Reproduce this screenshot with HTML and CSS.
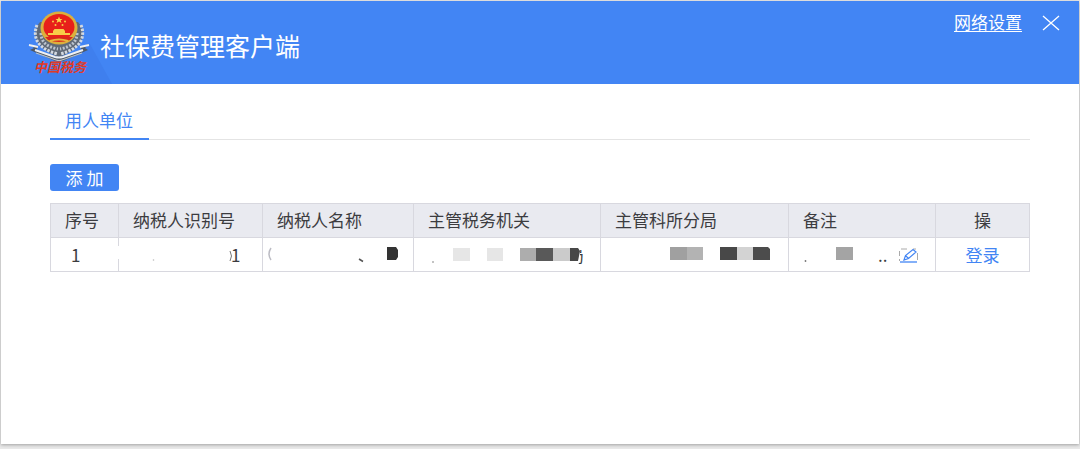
FILE: index.html
```html
<!DOCTYPE html>
<html lang="zh-CN">
<head>
<meta charset="utf-8">
<title>社保费管理客户端</title>
<link rel="stylesheet" href="styles.css">
</head>
<body>
<div class="window">
  <header class="titlebar">
    <div class="brand">
      <svg class="emblem" width="84" height="82" viewBox="28 2 84 82" role="img" aria-label="中国税务">
        <path d="M40 84V74L90 44L112 84Z" fill="#3f7fee"/>
        <path d="M40 22C30 34 36 49 59 57C82 49 88 34 78 22Z" fill="#5f6977"/>
        <g fill="none" stroke="#d3d9e1" stroke-width="3" stroke-dasharray="2.500 1.300">
          <path d="M37 25C32 38 38 49 58 54"/><path d="M81 25C86 38 80 49 60 54"/>
        </g>
        <g fill="none" stroke="#bcc4ce" stroke-width="3" stroke-dasharray="2 1.500">
          <path d="M41 33C41 42 47 47 58 49"/><path d="M77 33C77 42 71 47 60 49"/>
        </g>
        <path d="M29 44L38 47L36 50L55 56Q59 58 63 56L82 50L80 47L89 44L85 48L88 50L63 61Q59 62 55 61L30 50L34 48Z" fill="#4d5867"/>
        <path d="M29 45L38 47M89 45L80 47M35 50L55 57Q59 58 63 57L83 50" fill="none" stroke="#eef0f3" stroke-width="2"/>
        <path d="M36 53L56 60Q59 61 62 60L82 53" fill="none" stroke="#b9c0c9" stroke-width="1.200"/>
        <ellipse cx="59" cy="28" rx="18.500" ry="16.500" fill="#dcb03c"/>
        <ellipse cx="59" cy="27" rx="15.500" ry="13" fill="#e8201a"/>
        <path d="M59 16.500L60 19H62.500L60.600 20.500L61.500 23L59 21.500L56.500 23L57.400 20.500L55.500 19H58Z" fill="#fbd84b"/>
        <g fill="#f7cd48"><circle cx="53" cy="21.500" r="1"/><circle cx="65" cy="21.500" r="1"/><circle cx="55.500" cy="25" r="1"/><circle cx="62.500" cy="25" r="1"/>
          <path d="M53 31L54.500 29H63.500L65 31V33H70V35H48V33H53Z"/>
        </g>
        <path d="M45 37H73L70 40Q59 44 48 40Z" fill="#d9261c"/>
        <path d="M50 41Q59 38 68 41" fill="none" stroke="#e8b93c" stroke-width="2"/>
        <text class="emblem-text" x="34" y="72">中国税务</text>
      </svg>
      <h1 class="title">社保费管理客户端</h1>
    </div>
    <div class="actions">
      <a class="network" href="#">网络设置</a>
      <button class="close" type="button" aria-label="关闭">
        <svg width="18" height="16" viewBox="0 0 18 16"><path d="M1 1L17 15M17 1L1 15" fill="none" stroke="#fff" stroke-width="1.300"/></svg>
      </button>
    </div>
  </header>
  <main class="content">
    <nav class="tabs"><a class="tab" href="#" aria-current="page">用人单位</a></nav>
    <button class="add" type="button">添 加</button>
    <table class="units">
      <colgroup>
        <col class="c-index"><col class="c-id"><col class="c-name"><col class="c-authority"><col class="c-branch"><col class="c-note"><col class="c-action">
      </colgroup>
      <thead>
        <tr><th>序号</th><th>纳税人识别号</th><th>纳税人名称</th><th>主管税务机关</th><th>主管科所分局</th><th>备注</th><th class="center">操</th></tr>
      </thead>
      <tbody>
        <tr>
          <td class="index">1</td>
          <td><div class="cell">
            <svg width="112" height="33" viewBox="118 237 112 33"><path d="M116 245H120V258H116Z" fill="#fff"/><circle cx="152.500" cy="259" r=".8" fill="#bbb"/><path d="M229 250Q232 255 229 260" fill="none" stroke="#777"/></svg><span>1</span>
          </div></td>
          <td><div class="cell">
            <svg width="140" height="33" viewBox="262 237 140 33"><path d="M270 247Q266 253 270 259" fill="none" stroke="#bcbcc4" stroke-width="1.500"/><path d="M358 258L362 260.500" stroke="#555" stroke-width="1.500"/><path d="M386 246H395L397 249V256L395 259H386Z" fill="#333"/></svg>
          </div></td>
          <td><div class="cell authority">
            <span class="clipped">局</span>
            <svg class="mask" width="172" height="33" viewBox="413 237 172 33"><circle cx="432" cy="260" r=".8" fill="#777"/><path d="M452 246H469V259H452ZM486 246H502V259H486Z" fill="#e6e6e6"/><path d="M565 240H586V248H579V259L577 263H565Z" fill="#fff"/><path d="M519 246H536V259H519Z" fill="#adadad"/><path d="M535 246H553V259H535Z" fill="#595959"/><path d="M552 246H569V259H552Z" fill="#cbcbcb"/><path d="M569 246H577L579 249L577 259H569Z" fill="#484848"/></svg>
          </div></td>
          <td><div class="cell">
            <svg width="175" height="33" viewBox="600 237 175 33"><path d="M669 246H686V259H669Z" fill="#a0a0a0"/><path d="M686 246H702V259H686Z" fill="#b3b3b3"/><path d="M719 246H736V259H719Z" fill="#484848"/><path d="M736 246H752V259H736Z" fill="#d3d3d3"/><path d="M752 246H767L769 248V259H752Z" fill="#4c4c4c"/></svg>
          </div></td>
          <td><div class="cell">
            <svg width="89" height="33" viewBox="788 237 89 33"><circle cx="804.500" cy="260" r=".9" fill="#777"/><path d="M835 246H852V259H835Z" fill="#a4a4a4"/></svg><span class="dots">..</span>
            <button class="edit" type="button" aria-label="编辑备注">
              <svg width="22" height="18" viewBox="897 244 22 18"><path d="M899.500 254V249M901 247H907M913 247H916M917.500 251V258M899.500 257V259" fill="none" stroke="#aaa"/><path d="M904 258L905.500 253.500L913 247.500L916 250L908.500 256.500ZM905.500 253.500L908.500 256.500" fill="none" stroke="#4285f4" stroke-width="1.200"/><path d="M900 260H917" stroke="#4285f4" stroke-width="1.300"/></svg>
            </button>
          </div></td>
          <td class="center"><a class="login" href="#">登录</a></td>
        </tr>
      </tbody>
    </table>
  </main>
</div>
</body>
</html>
```

FILE: styles.css
```css
* { box-sizing: border-box; }

body {
  margin: 0;
  padding: 1px 2px 5px 1px;
  min-height: 100vh;
  display: flex;
  background: #e8e8e8;
  color: #3c3c40;
  font: 17px/24px "Noto Sans CJK SC", sans-serif;
}

a { color: inherit; text-decoration: none; }

button {
  border: 0;
  padding: 0;
  background: none;
  color: inherit;
  font: inherit;
  cursor: pointer;
}

svg { display: block; flex: none; }

.window {
  flex: 1;
  background: #fff;
  box-shadow: 0 1px 3px rgba(0, 0, 0, 0.3);
}

.titlebar {
  display: flex;
  justify-content: space-between;
  align-items: flex-start;
  height: 83px;
  padding: 1px 19px 0 27px;
  background: #4285f4;
  color: #fff;
}

.brand { display: flex; }

.emblem { margin-right: -12px; }

.emblem-text {
  fill: #e23a25;
  font: italic 700 13px "Noto Sans CJK SC", sans-serif;
}

.title {
  margin: 26px 0 0;
  font-size: 25px;
  line-height: 34px;
  font-weight: 400;
}

.actions {
  display: flex;
  align-items: center;
  gap: 20px;
  padding-top: 11px;
}

.network {
  border-bottom: 1px solid #fff;
  line-height: 18px;
}

.content { padding: 20px 49px 0; }

.tabs {
  display: flex;
  border-bottom: 1px solid #e4e4e4;
}

.tab {
  margin-bottom: -1px;
  padding: 4px 16px 6px 15px;
  border-bottom: 2px solid #4285f4;
  color: #4285f4;
}

.add {
  display: block;
  width: 69px;
  height: 27px;
  margin: 24px 0 12px;
  border-radius: 3px;
  background: #4285f4;
  color: #fff;
  line-height: 26px;
}

.units {
  width: 100%;
  table-layout: fixed;
  border-collapse: collapse;
}

.c-index { width: 68px; }
.c-id { width: 144px; }
.c-name { width: 151px; }
.c-authority { width: 187px; }
.c-branch { width: 188px; }
.c-note { width: 147px; }
.c-action { width: 94px; }

.units th,
.units td {
  height: 34px;
  padding: 0;
  border: 1px solid #d8d8df;
  text-align: left;
}

.units th {
  padding: 0 14px 2px;
  background: #e9eaf0;
  font-weight: 400;
}

.units .center { text-align: center; }
.units .index { padding-left: 20px; }

.cell {
  position: relative;
  display: flex;
  align-items: center;
  height: 32px;
}

.cell svg { overflow: visible; }

.authority { padding-left: 153px; }

.mask {
  position: absolute;
  top: 0;
  left: 0;
}

.login { color: #4285f4; }

.edit { margin-left: 10px; }
```
